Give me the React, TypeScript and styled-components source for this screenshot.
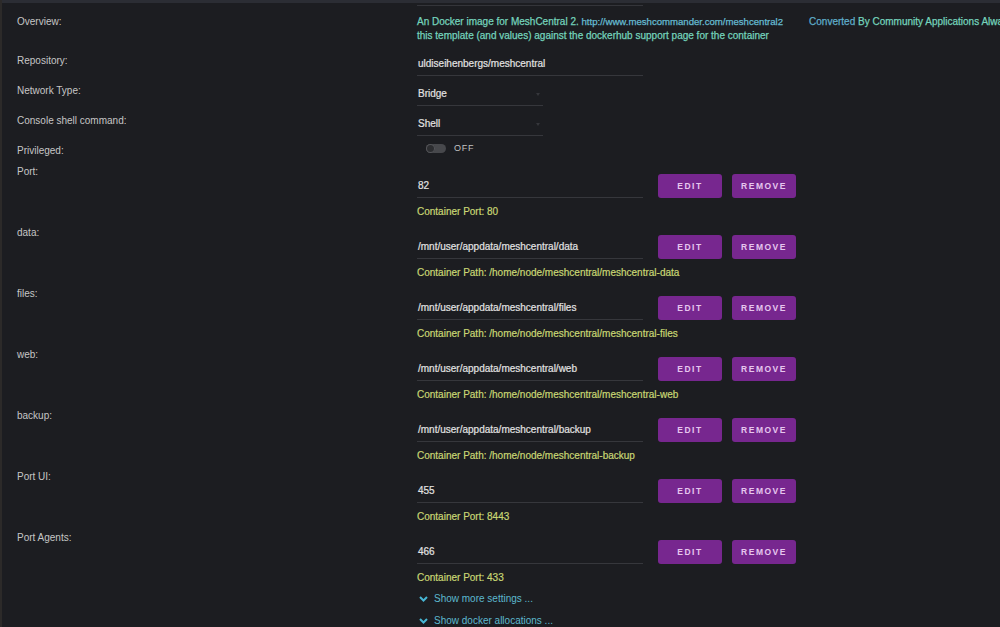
import React from "react";
import styled, { createGlobalStyle } from "styled-components";

const GlobalStyle = createGlobalStyle`
  html, body {
    margin: 0;
    padding: 0;
    overflow: hidden;
    background: #1c1d21;
  }
  body {
    font-family: "Liberation Sans", Arial, sans-serif;
  }
`;

const Page = styled.div`
  width: 1000px;
  height: 627px;
  overflow: hidden;
  background: #1c1d21;
  border-left: 2px solid #2c2a29;
  box-sizing: border-box;
`;

const TopStrip = styled.div`
  height: 3px;
  background: #2b2d34;
`;

const Form = styled.div`
  padding-left: 15px;
  font-size: 10px;
  line-height: 14px;
`;

const Row = styled.div<{ $height?: number; $top?: number }>`
  display: grid;
  grid-template-columns: 400px minmax(0, 1fr);
  height: ${(p) => (p.$height ? `${p.$height}px` : "auto")};
  margin-top: ${(p) => p.$top ?? 0}px;
`;

const Label = styled.div`
  color: #c6c6c6;
`;

const PrevLine = styled.div`
  width: 226px;
  height: 2px;
  border-bottom: 1px solid #34353a;
`;

// the description runs past the right edge of the window, as in the original page
const OverviewText = styled.div`
  width: 625px;
  color: #74d3bc;
  -webkit-text-stroke: 0.25px currentColor;
`;

const Link = styled.span`
  color: #66bcd2;
  font-size: 9.6px;
`;

const Converted = styled.span`
  color: #5faecb;
  margin-left: 26px;
`;

const Field = styled.div<{ $width: number; $select?: boolean }>`
  position: relative;
  width: ${(p) => p.$width}px;
  padding: 3px 0 4px 1px;
  box-sizing: border-box;
  height: 22px;
  color: #e2e2e2;
  -webkit-text-stroke: 0.2px currentColor;
  border-bottom: 1px solid #36373c;

  ${(p) =>
    p.$select &&
    `
    &::after {
      content: "";
      position: absolute;
      right: 3px;
      top: 9px;
      border-left: 2px solid transparent;
      border-right: 2px solid transparent;
      border-top: 3px solid #35363b;
    }
  `}
`;

const ToggleLine = styled.div`
  display: flex;
  align-items: center;
  gap: 8px;
  height: 10px;
  padding-left: 9px;
  margin-top: -1px;
`;

const Track = styled.div`
  position: relative;
  width: 20px;
  height: 9px;
  border-radius: 5px;
  background: #47484c;
`;

const Knob = styled.div`
  position: absolute;
  left: 0;
  top: 0;
  width: 9px;
  height: 9px;
  border-radius: 50%;
  background: #2c2d30;
  box-shadow: inset 0 0 0 1px #55565a;
`;

const OffText = styled.span`
  font-size: 9px;
  line-height: 10px;
  letter-spacing: 0.8px;
  color: #c2c2c2;
`;

const MapRowBox = styled.div`
  padding: 9px 0 7px;
`;

const Controls = styled.div`
  display: flex;
  align-items: flex-end;
`;

const Button = styled.button<{ $gap: number }>`
  width: 64px;
  height: 24px;
  margin-left: ${(p) => p.$gap}px;
  border: none;
  border-radius: 3px;
  background: #77278f;
  color: #e6c6ee;
  font-family: "Liberation Sans", Arial, sans-serif;
  font-size: 8.5px;
  font-weight: bold;
  letter-spacing: 1.5px;
  padding: 0;
`;

const Hint = styled.div`
  margin-top: 7px;
  color: #c9d774;
  -webkit-text-stroke: 0.2px currentColor;
`;

const Toggles = styled.div`
  padding-left: 402px;
`;

const ShowMore = styled.div`
  display: flex;
  align-items: center;
  gap: 6px;
  color: #5db9cf;
  margin-bottom: 8px;
`;

const Chevron = () => (
  <svg width="9" height="6" viewBox="0 0 9 6">
    <path d="M1 1 L4.5 4.5 L8 1" fill="none" stroke="#47b6d4" strokeWidth="2" />
  </svg>
);

type Mapping = { label: string; value: string; hint: string };

const mappings: Mapping[] = [
  { label: "Port:", value: "82", hint: "Container Port: 80" },
  { label: "data:", value: "/mnt/user/appdata/meshcentral/data", hint: "Container Path: /home/node/meshcentral/meshcentral-data" },
  { label: "files:", value: "/mnt/user/appdata/meshcentral/files", hint: "Container Path: /home/node/meshcentral/meshcentral-files" },
  { label: "web:", value: "/mnt/user/appdata/meshcentral/web", hint: "Container Path: /home/node/meshcentral/meshcentral-web" },
  { label: "backup:", value: "/mnt/user/appdata/meshcentral/backup", hint: "Container Path: /home/node/meshcentral-backup" },
  { label: "Port UI:", value: "455", hint: "Container Port: 8443" },
  { label: "Port Agents:", value: "466", hint: "Container Port: 433" },
];

function App() {
  return (
    <Page>
      <GlobalStyle />
      <TopStrip />
      <Form>
        <Row>
          <Label />
          <PrevLine />
        </Row>

        <Row $top={9} $height={39}>
          <Label>Overview:</Label>
          <OverviewText>
            An Docker image for MeshCentral 2. <Link>http://www.meshcommander.com/meshcentral2</Link>
            <Converted>Converted</Converted> By Community Applications Always check this template (and values) against
            the dockerhub support page for the container
          </OverviewText>
        </Row>

        <Row $height={30}>
          <Label>Repository:</Label>
          <Field $width={226}>uldiseihenbergs/meshcentral</Field>
        </Row>

        <Row $height={30}>
          <Label>Network Type:</Label>
          <Field $width={126} $select>Bridge</Field>
        </Row>

        <Row $height={30}>
          <Label>Console shell command:</Label>
          <Field $width={126} $select>Shell</Field>
        </Row>

        <Row $height={21}>
          <Label>Privileged:</Label>
          <ToggleLine>
            <Track>
              <Knob />
            </Track>
            <OffText>OFF</OffText>
          </ToggleLine>
        </Row>

        {mappings.map((m) => (
          <Row key={m.label}>
            <Label>{m.label}</Label>
            <MapRowBox>
              <Controls>
                <Field $width={226}>{m.value}</Field>
                <Button $gap={15}>EDIT</Button>
                <Button $gap={10}>REMOVE</Button>
              </Controls>
              <Hint>{m.hint}</Hint>
            </MapRowBox>
          </Row>
        ))}

        <Toggles>
          <ShowMore>
            <Chevron />
            Show more settings ...
          </ShowMore>
          <ShowMore>
            <Chevron />
            Show docker allocations ...
          </ShowMore>
        </Toggles>
      </Form>
    </Page>
  );
}

export default App;
